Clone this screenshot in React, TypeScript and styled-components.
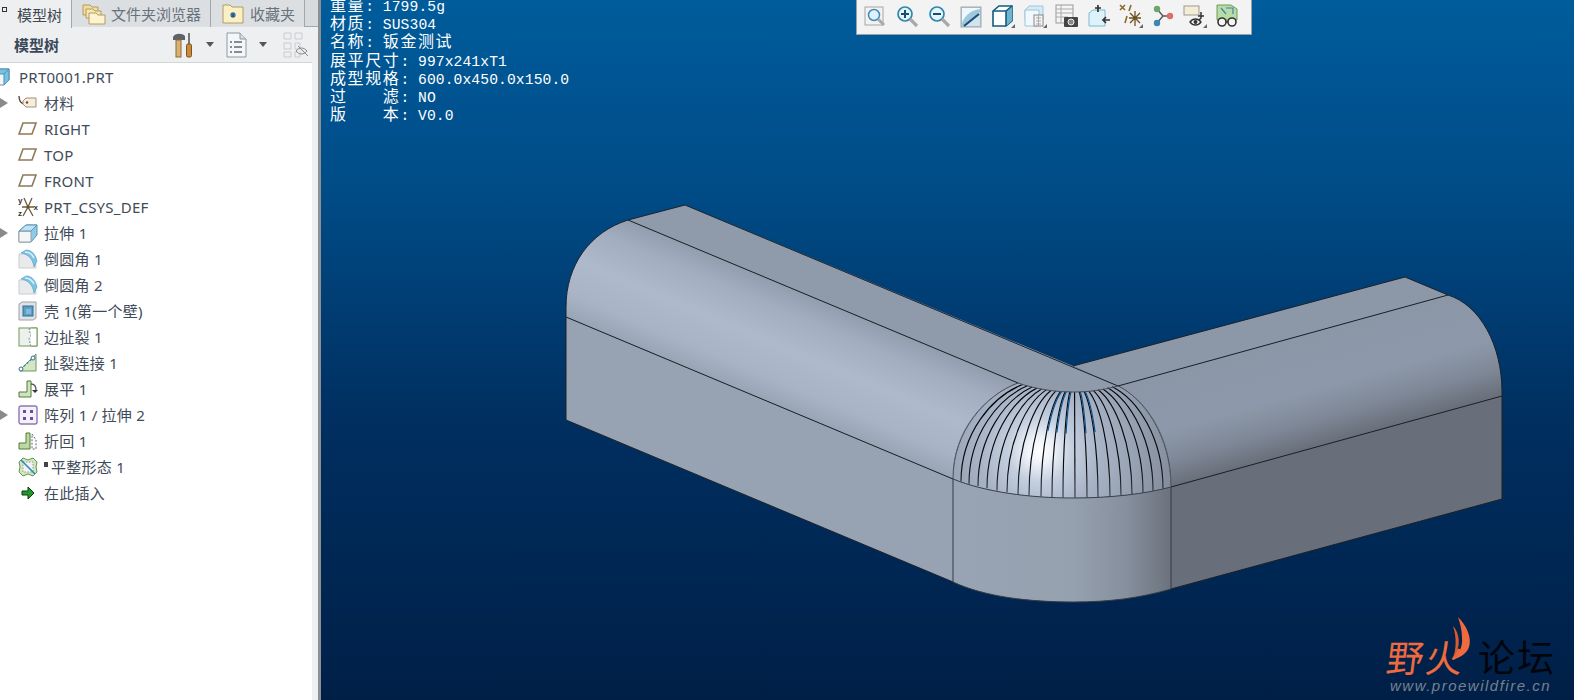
import React from 'react';
import styled, { createGlobalStyle } from 'styled-components';

const GlobalStyle = createGlobalStyle`
  html, body {
    margin: 0;
    padding: 0;
    background: #001f47;
  }
`;

const uiFont = `"Noto Sans", "Noto Sans CJK SC", sans-serif`;

const Page = styled.div`
  display: flex;
  width: 1574px;
  height: 700px;
  overflow: hidden;
  font-family: ${uiFont};
`;

const Sidebar = styled.aside`
  display: flex;
  flex-direction: column;
  flex: 0 0 318px;
  height: 700px;
  background: linear-gradient(to right, #fff 312px, #eeeff1 312px);
  border-right: 3px solid #8c8f93;
  box-sizing: content-box;
`;

const TabBar = styled.div`
  display: flex;
  height: 27px;
  background: #d8dbde;
  border-bottom: 1px solid #a3a7ab;
  box-sizing: border-box;
`;

const Tab = styled.div<{ $width: number; $active?: boolean }>`
  position: relative;
  display: flex;
  align-items: center;
  gap: 5px;
  width: ${p => p.$width}px;
  height: ${p => (p.$active ? 28 : 27)}px;
  box-sizing: border-box;
  padding-left: ${p => (p.$active ? 17 : 10)}px;
  background: ${p => (p.$active ? '#eeeff1' : '#dcdfe2')};
  border-right: 1px solid #a3a7ab;
  color: ${p => (p.$active ? '#3f4750' : '#68727d')};
  font-size: 15px;
  white-space: nowrap;
`;

const PinMark = styled.span`
  position: absolute;
  left: 2px;
  top: 7px;
  width: 3px;
  height: 3px;
  border: 1px solid #333;
`;

const PanelHeader = styled.div`
  display: flex;
  align-items: center;
  height: 36px;
  padding-left: 14px;
  background: #eeeff1;
  border-bottom: 1px solid #d3d6d9;
  width: 312px;
  box-sizing: border-box;
`;

const PanelTitle = styled.div`
  flex: 0 0 159px;
  color: #3b4857;
  font-size: 15px;
  font-weight: 700;
`;

const HeaderIcon = styled.svg<{ $gap: number }>`
  flex: none;
  margin-right: ${p => p.$gap}px;
`;

const Caret = styled.span<{ $gap: number }>`
  flex: none;
  width: 0;
  height: 0;
  margin-right: ${p => p.$gap}px;
  border-left: 4px solid transparent;
  border-right: 4px solid transparent;
  border-top: 5px solid #555;
`;

const Tree = styled.ul`
  list-style: none;
  margin: 0;
  padding: 1px 0 0;
  width: 312px;
`;

const Row = styled.li`
  display: flex;
  align-items: center;
  height: 26px;
  color: #3f4b59;
  font-size: 15px;
  line-height: 20px;
  letter-spacing: 0.25px;
  white-space: nowrap;
`;

const Expander = styled.span<{ $open: boolean }>`
  flex: 0 0 8px;
  height: 0;
  margin-right: 10px;
  border-left: 8px solid ${p => (p.$open ? '#8a8a8a' : 'transparent')};
  border-top: 5px solid transparent;
  border-bottom: 5px solid transparent;
  box-sizing: border-box;
`;

const IconSlot = styled.span<{ $root?: boolean }>`
  display: flex;
  flex: 0 0 20px;
  margin: ${p => (p.$root ? '0 8px 0 -9px' : '0 6px 0 0')};
`;

const Marker = styled.span`
  align-self: flex-start;
  flex: none;
  width: 4px;
  height: 5px;
  margin: 8px 3px 0 0;
  background: #444;
`;

const Canvas = styled.main`
  position: relative;
  flex: 1;
  height: 700px;
  overflow: hidden;
  background: linear-gradient(to bottom, #005c9b 0%, #004b86 28%, #002f60 60%, #001f47 100%);
`;

const PartDrawing = styled.svg`
  position: absolute;
  left: 0;
  top: 0;
`;

const InfoBlock = styled.div`
  position: absolute;
  left: 9px;
  top: -4px;
  color: #fff;
  font-family: "Noto Sans CJK SC", sans-serif;
  font-size: 16px;
`;

const InfoRow = styled.div`
  display: flex;
  align-items: baseline;
  height: 18.2px;
  white-space: pre;
`;

const InfoLabel = styled.span`
  line-height: 16px;
  letter-spacing: 1.6px;
`;

const InfoColon = styled.span`
  width: 17.6px;
  font-family: "Liberation Mono", monospace;
  font-size: 14.67px;
  line-height: 14px;
`;

const InfoValue = styled.span<{ $cjk?: boolean }>`
  font-family: ${p => (p.$cjk ? `"Noto Sans CJK SC", sans-serif` : `"Liberation Mono", monospace`)};
  font-size: ${p => (p.$cjk ? 16 : 14.67)}px;
  line-height: 14px;
  letter-spacing: ${p => (p.$cjk ? 1.6 : 0.1)}px;
`;

const ViewToolbar = styled.div`
  position: absolute;
  left: 535px;
  top: 0;
  display: flex;
  align-items: center;
  gap: 8px;
  width: 396px;
  height: 35px;
  box-sizing: border-box;
  padding: 0 0 2px 6px;
  background: #f3f3f3;
  border: 1px solid #9aa0a6;
  border-top: 0;
`;

const Watermark = styled.div`
  position: absolute;
  left: 1066px;
  top: 633px;
  width: 180px;
`;

const WatermarkTitle = styled.div`
  display: flex;
  font-family: "Noto Sans CJK SC", sans-serif;
  font-size: 37px;
  letter-spacing: 2px;
  line-height: 46px;
`;

const WatermarkFire = styled.span`
  display: inline-block;
  color: #ef6a3c;
  transform: skewX(-7deg);
`;

const WatermarkForum = styled.span`
  margin-left: 13px;
  color: #02060c;
`;

const WatermarkUrl = styled.div`
  margin: -2px 0 0 3px;
  color: #76828f;
  font-family: "Liberation Sans", sans-serif;
  font-size: 15px;
  font-style: italic;
  letter-spacing: 1.5px;
  white-space: nowrap;
`;

const Flame = styled.svg`
  position: absolute;
  left: 61px;
  top: -17px;
`;

const TreeSvg = ({ children }: { children: React.ReactNode }) => (
  <svg width="20" height="20" viewBox="0 0 20 20" fill="none">{children}</svg>
);

const SolidIcon = () => (
  <TreeSvg>
    <path d="M1 7l6-5h11v11l-5 5H1z" fill="#f2f5f7" stroke="#7b8b97" />
    <path d="M1 7l6-5h11l-5 5z M13 7l5-5v11l-5 5z" fill="#74c2e6" stroke="#4f8fb0" />
  </TreeSvg>
);

const TagIcon = () => (
  <TreeSvg>
    <path d="M1 3c0 4 1 7 5 8" stroke="#4a4030" strokeWidth="1.3" />
    <path d="M5 8l3-3h10v9H8l-3-3z" fill="#f5ede0" stroke="#a48f6d" />
    <circle cx="9" cy="9.5" r="1.2" fill="#8a3a2a" />
  </TreeSvg>
);

const PlaneIcon = () => (
  <TreeSvg>
    <path d="M5 4h13l-4 11H1z" fill="#fff" stroke="#8e7a58" strokeWidth="1.6" />
  </TreeSvg>
);

const CsysIcon = () => (
  <TreeSvg>
    <path d="M10 10L6 1M10 10l4-9M10 10l-5 9M10 10l5 9M4 10h12" stroke="#6d5c3e" strokeWidth="1.3" />
    <text x="0" y="6" fontSize="8" fontFamily="Liberation Sans" fontWeight="700" fill="#333">y</text>
    <text x="0" y="19" fontSize="8" fontFamily="Liberation Sans" fontWeight="700" fill="#333">z</text>
    <text x="15.5" y="13" fontSize="8" fontFamily="Liberation Sans" fontWeight="700" fill="#333">x</text>
    <circle cx="10" cy="10" r="1.5" fill="#6d4c1e" />
  </TreeSvg>
);

const ExtrudeIcon = () => (
  <TreeSvg>
    <path d="M1 8l7-6h11v10l-6 7H1z" fill="#8fcbe8" stroke="#5a93b0" />
    <path d="M1 8h12v11H1z" fill="#f4f5f5" stroke="#9aa3aa" />
    <path d="M1 8l7-6h11l-6 6z" fill="#bfe3f3" stroke="#5a93b0" />
  </TreeSvg>
);

const RoundIcon = () => (
  <TreeSvg>
    <path d="M1 5h7c6 0 10 5 10 14H1z" fill="#e9eaeb" stroke="#c9ccce" />
    <path d="M3 4l5-3c5 0 9 3 11 11l-3 6C15 10 10 5 3 4z" fill="#7cc4e6" stroke="#4d97bb" strokeWidth=".6" />
    <path d="M7 3c4 0 7 2 9 6" stroke="#d6eff9" strokeWidth="1.6" />
  </TreeSvg>
);

const ShellIcon = () => (
  <TreeSvg>
    <path d="M1 3l3-2h14v16l-3 2H1z" fill="#dfe3e6" stroke="#9aa3aa" />
    <rect x="5" y="5" width="10" height="10" fill="#5e9ec4" stroke="#2f6f98" />
    <rect x="8" y="8" width="5" height="5" fill="#7fb9db" />
  </TreeSvg>
);

const RipIcon = () => (
  <TreeSvg>
    <rect x="1" y="1" width="18" height="18" fill="#eef0ee" stroke="#6c9a55" />
    <path d="M12 1c-3 4 3 6 0 9s2 6 0 9" stroke="#6f8f8a" strokeDasharray="2 1.5" />
    <path d="M13 1h6v18h-6" fill="#fff" stroke="#6c9a55" />
  </TreeSvg>
);

const RipJoinIcon = () => (
  <TreeSvg>
    <path d="M2 17L18 1v17H2z" fill="#d5e6c6" stroke="#6c9a55" />
    <path d="M3 16L17 3" stroke="#3a7aa8" strokeDasharray="2 2" strokeWidth="1.2" />
    <circle cx="3" cy="16" r="2" fill="#fff" stroke="#2a70a0" />
    <circle cx="15" cy="5" r="2" fill="#fff" stroke="#2a70a0" />
  </TreeSvg>
);

const UnbendIcon = () => (
  <TreeSvg>
    <path d="M1 18v-5h8V2h4v16z" fill="#cfe3bd" stroke="#4f7a38" />
    <path d="M13 5c3 0 5 2 5 6" stroke="#555" strokeWidth="1.3" />
    <path d="M14 11h6l-3 3z" fill="#333" />
  </TreeSvg>
);

const PatternIcon = () => (
  <TreeSvg>
    <rect x="1" y="1" width="18" height="18" rx="2" fill="#f5f1fa" stroke="#8a78b0" strokeWidth="1.4" />
    {[5, 12].map(y => [5, 12].map(x => <rect key={`${x}-${y}`} x={x} y={y} width="3" height="3" fill="#6a4ca0" />))}
  </TreeSvg>
);

const BendBackIcon = () => (
  <TreeSvg>
    <path d="M1 18v-6h7V2h4v16z" fill="#bcd9a4" stroke="#4f7a38" />
    <path d="M14 3l4 6v9h-4z" fill="#fff" stroke="#666" strokeDasharray="2 1.5" />
  </TreeSvg>
);

const FlatIcon = () => (
  <TreeSvg>
    <path d="M1 5l4-4 5 2 5-2 4 4-1 5 1 5-4 4-5-2-5 2-4-4 1-5z" fill="#cfe8c0" stroke="#5f9a48" />
    <rect x="5" y="5" width="10" height="10" fill="#f2f2f2" stroke="#999" strokeDasharray="1.5 1.5" />
    <path d="M3 3l14 14" stroke="#2f86c0" strokeWidth="1.6" />
  </TreeSvg>
);

const InsertIcon = () => (
  <TreeSvg>
    <path d="M4 8h6V4l6 6-6 6v-4H4z" fill="#1f9a2a" stroke="#0a3a10" strokeWidth="1" />
  </TreeSvg>
);

type TreeItem = {
  label: string;
  Icon: () => React.ReactElement;
  open?: boolean;
  root?: boolean;
  marked?: boolean;
};

const treeItems: TreeItem[] = [
  { label: 'PRT0001.PRT', Icon: SolidIcon, root: true },
  { label: '材料', Icon: TagIcon, open: true },
  { label: 'RIGHT', Icon: PlaneIcon },
  { label: 'TOP', Icon: PlaneIcon },
  { label: 'FRONT', Icon: PlaneIcon },
  { label: 'PRT_CSYS_DEF', Icon: CsysIcon },
  { label: '拉伸 1', Icon: ExtrudeIcon, open: true },
  { label: '倒圆角 1', Icon: RoundIcon },
  { label: '倒圆角 2', Icon: RoundIcon },
  { label: '壳 1(第一个壁)', Icon: ShellIcon },
  { label: '边扯裂 1', Icon: RipIcon },
  { label: '扯裂连接 1', Icon: RipJoinIcon },
  { label: '展平 1', Icon: UnbendIcon },
  { label: '阵列 1 / 拉伸 2', Icon: PatternIcon, open: true },
  { label: '折回 1', Icon: BendBackIcon },
  { label: '平整形态 1', Icon: FlatIcon, marked: true },
  { label: '在此插入', Icon: InsertIcon },
];

const infoRows = [
  { label: '重量', value: '1799.5g' },
  { label: '材质', value: 'SUS304' },
  { label: '名称', value: '钣金测试', cjk: true },
  { label: '展平尺寸', value: '997x241xT1' },
  { label: '成型规格', value: '600.0x450.0x150.0' },
  { label: '过\u3000\u3000滤', value: 'NO' },
  { label: '版\u3000\u3000本', value: 'V0.0' },
];

const ToolSvg = ({ children }: { children: React.ReactNode }) => (
  <svg width="24" height="24" viewBox="0 0 24 24" fill="none" style={{ flex: 'none' }}>{children}</svg>
);

const Corner = () => <path d="M20 24h4v-4z" fill="#666" />;

const toolIcons: React.ReactElement[] = [
  <ToolSvg key="refit">
    <rect x="2" y="3" width="18" height="18" fill="#f2f2f2" stroke="#a6a6a6" />
    <circle cx="11" cy="11" r="5.5" fill="#dff1fb" stroke="#3f8db5" strokeWidth="1.5" />
    <path d="M15 15l6 6" stroke="#aaa" strokeWidth="3" />
  </ToolSvg>,
  <ToolSvg key="zoom-in">
    <circle cx="10" cy="10" r="7" fill="#e6f4fb" stroke="#2f86ad" strokeWidth="1.7" />
    <path d="M6 10h8M10 6v8" stroke="#164f70" strokeWidth="2" />
    <path d="M15 15l7 7" stroke="#a9a9a9" strokeWidth="3.2" />
  </ToolSvg>,
  <ToolSvg key="zoom-out">
    <circle cx="10" cy="10" r="7" fill="#e6f4fb" stroke="#2f86ad" strokeWidth="1.7" />
    <path d="M6 10h8" stroke="#164f70" strokeWidth="2" />
    <path d="M15 15l7 7" stroke="#a9a9a9" strokeWidth="3.2" />
  </ToolSvg>,
  <ToolSvg key="repaint">
    <rect x="2" y="3" width="20" height="20" fill="#9fc8dc" stroke="#a8a8a8" />
    <path d="M3 19C7 9 14 6 21 5V4H3z" fill="#eef7fb" />
    <path d="M3 22c5-2 12-7 18-14v14z" fill="#cfe4ee" />
    <path d="M5 22L20 10" stroke="#1c4f75" strokeWidth="2.2" />
  </ToolSvg>,
  <ToolSvg key="display">
    <path d="M2 7l6-5h13v15l-6 5H2z" fill="#fff" stroke="#125b7e" strokeWidth="1.6" />
    <path d="M15 7l6-5v15l-6 5z" fill="#6fb4cf" />
    <path d="M2 7h13v15M15 7l6-5" stroke="#125b7e" strokeWidth="1.6" />
    <Corner />
  </ToolSvg>,
  <ToolSvg key="views">
    <path d="M2 6l4-4h14v14H2z" fill="#d5ebf6" stroke="#9dc6da" />
    <path d="M2 6h14v16H2z" fill="#f2f9fc" stroke="#9dc6da" />
    <rect x="11" y="11" width="9" height="11" fill="#f5f5f5" stroke="#888" />
    <path d="M13 14h5M13 17h5M13 20h5M15.5 11v11" stroke="#aaa" />
    <Corner />
  </ToolSvg>,
  <ToolSvg key="snapshot">
    <rect x="1" y="1" width="17" height="18" fill="#f5f5f5" stroke="#999" />
    <path d="M1 5h17M1 9h17M1 13h12M6 1v18" stroke="#aaa" />
    <rect x="9" y="13" width="14" height="10" rx="1" fill="#444" />
    <circle cx="16" cy="18" r="3" fill="#888" stroke="#eee" />
  </ToolSvg>,
  <ToolSvg key="orient">
    <path d="M2 9l4-3h12v16H2z" fill="#dff1fa" stroke="#7db9d6" />
    <path d="M11 1v7M8 4h6" stroke="#333" strokeWidth="1.7" />
    <path d="M23 16h-7M19 13l-3 3 3 3" stroke="#333" strokeWidth="1.7" />
  </ToolSvg>,
  <ToolSvg key="datum">
    <path d="M1 1l5 5M6 1L1 6" stroke="#8a6a2a" strokeWidth="1.6" />
    <path d="M12 1l-2 6M8 12l-2 7" stroke="#8a6a2a" strokeWidth="1.6" />
    <path d="M16 7v15M10 14h12M11 9l10 10M21 9L11 19" stroke="#6b4f1f" strokeWidth="1.3" />
    <Corner />
  </ToolSvg>,
  <ToolSvg key="annot">
    <path d="M6 5l6 7-6 7M12 12h6" stroke="#555" strokeWidth="1.4" />
    <circle cx="6" cy="5" r="3.2" fill="#6aa86a" />
    <circle cx="6" cy="19" r="3.2" fill="#3a86b5" />
    <circle cx="19" cy="12" r="3.2" fill="#d9706a" />
  </ToolSvg>,
  <ToolSvg key="saved">
    <rect x="1" y="2" width="15" height="9" fill="#f5ecd5" stroke="#999" />
    <path d="M15 12h6M18 8v6l-3 3" stroke="#333" strokeWidth="1.5" />
    <path d="M7 18c3-4 8-4 11 0-3 4-8 4-11 0z" fill="#fff" stroke="#333" strokeWidth="1.3" />
    <circle cx="12.5" cy="18" r="2" fill="#333" />
    <Corner />
  </ToolSvg>,
  <ToolSvg key="inspect">
    <path d="M2 1h14l6 4v11H2z" fill="#b9dba6" stroke="#6b9e55" />
    <path d="M6 4l5 6M11 4h7v6" stroke="#3a86b5" strokeWidth="1.2" />
    <circle cx="7" cy="18" r="4" fill="#f5f5f5" stroke="#333" strokeWidth="1.6" />
    <circle cx="17" cy="18" r="4" fill="#f5f5f5" stroke="#333" strokeWidth="1.6" />
    <path d="M11 18h2" stroke="#333" strokeWidth="1.6" />
  </ToolSvg>,
];

// rib ends read from the reference, left to right
const ribBottoms = [953, 961, 969, 978, 987, 997, 1007, 1018, 1029, 1041, 1052, 1063, 1075, 1087, 1098, 1110, 1121, 1132, 1143, 1153, 1163, 1171];

const baseY = (x: number) => {
  const d = x - 1073;
  return d < 0 ? 498 - 19 * (d / 120) ** 2 : 498 - 11 * (d / 98) ** 2;
};

const crownY = (x: number) => {
  const d = x - 1073;
  return d < 0 ? 392 - 9 * (d / 55) ** 2 : 392 - 7 * (d / 45) ** 2;
};

const ribPath = (i: number) => {
  const bx = ribBottoms[i];
  const by = baseY(bx);
  const tx = 1018 + (i / 21) * 99;
  const ty = crownY(tx);
  const h = by - ty;
  return `M${tx} ${ty}C${tx + (bx - tx) * 0.5} ${ty + h * 0.125} ${bx} ${by - h * 0.5} ${bx} ${by}`;
};

const Part = () => (
  <PartDrawing width="1253" height="700" viewBox="321 0 1253 700">
    <defs>
      <linearGradient id="leftRound" gradientUnits="userSpaceOnUse" x1="628" y1="220" x2="584" y2="325">
        <stop offset="0" stopColor="#929dae" />
        <stop offset=".2" stopColor="#a2aec0" />
        <stop offset=".5" stopColor="#aebacc" />
        <stop offset=".8" stopColor="#a8b3c5" />
        <stop offset="1" stopColor="#98a3b4" />
      </linearGradient>
      <linearGradient id="rightRound" gradientUnits="userSpaceOnUse" x1="1118" y1="386" x2="1148" y2="493">
        <stop offset="0" stopColor="#8b96a7" />
        <stop offset=".5" stopColor="#8d99aa" />
        <stop offset=".78" stopColor="#7e8796" />
        <stop offset="1" stopColor="#69707b" />
      </linearGradient>
      <linearGradient id="cornerBase" gradientUnits="userSpaceOnUse" x1="953" y1="0" x2="1171" y2="0">
        <stop offset="0" stopColor="#98a3b3" />
        <stop offset=".55" stopColor="#96a1b0" />
        <stop offset=".8" stopColor="#858f9d" />
        <stop offset="1" stopColor="#6b727d" />
      </linearGradient>
      <radialGradient id="dome" gradientUnits="userSpaceOnUse" cx="1040" cy="450" r="135">
        <stop offset="0" stopColor="#ffffff" />
        <stop offset=".1" stopColor="#eef2f8" />
        <stop offset=".24" stopColor="#c3cede" />
        <stop offset=".45" stopColor="#a8b4c6" />
        <stop offset=".75" stopColor="#939eae" />
        <stop offset="1" stopColor="#838c9a" />
      </radialGradient>
      <linearGradient id="ribStroke" gradientUnits="userSpaceOnUse" x1="0" y1="383" x2="0" y2="498">
        <stop offset="0" stopColor="#05080c" />
        <stop offset=".7" stopColor="#05080c" />
        <stop offset="1" stopColor="#3b424c" />
      </linearGradient>
    </defs>

    <path d="M685 205L1073 366 1118 386C1103 390 1090 392 1073 392 1055 392 1035 389 1018 383L628 220Z" fill="#8f9aaa" />
    <path d="M1073 366L1405 277 1448 295 1118 386Z" fill="#8c97a8" />
    <path d="M628 220C590 232 566 265 566 307V317L953 479V476C953 430 985 395 1018 383Z" fill="url(#leftRound)" />
    <path d="M1118 386L1448 295C1480 305 1502 345 1502 392V396L1171 487V477C1168 430 1145 400 1118 386Z" fill="url(#rightRound)" />
    <path d="M566 317L953 479V582L566 420Z" fill="#97a2b2" />
    <path d="M1171 487L1502 396V499L1171 589Z" fill="#696f7a" />
    <path d="M953 479C985 492 1030 498 1073 498 1110 498 1145 494 1171 487V589C1140 598 1110 602 1073 602 1030 602 985 597 953 582Z" fill="url(#cornerBase)" />
    <path d="M953 479V476C953 430 985 395 1018 383 1035 389 1055 392 1073 392 1090 392 1103 390 1118 386 1145 400 1168 430 1171 477V487C1145 494 1110 498 1073 498 1030 498 985 492 953 479Z" fill="url(#dome)" />

    {ribBottoms.map((_, i) => (
      <path
        key={i}
        d={ribPath(i)}
        fill="none"
        stroke={i === 0 || i === 21 ? '#4a515b' : 'url(#ribStroke)'}
        strokeWidth={i === 0 || i === 21 ? 1 : 1.15}
      />
    ))}
    {[9, 10, 11, 13, 14].map(i => (
      <path key={i} d={ribPath(i)} fill="none" stroke="#0a4f8c" strokeWidth="1.2" strokeDasharray="42 200" transform="translate(1.1 0)" />
    ))}

    <g fill="none" stroke="#1c2229" strokeWidth="1">
      <path d="M628 220L685 205 1118 386" />
      <path d="M1073 366L1405 277 1448 295" />
      <path d="M628 220L1018 383" />
      <path d="M1118 386L1448 295" />
      <path d="M628 220C590 232 566 265 566 307V420L953 582" />
      <path d="M566 317L953 479" />
      <path d="M1448 295C1480 305 1502 345 1502 392V499L1171 589" />
      <path d="M1171 487L1502 396" />
      <path d="M953 479V582C985 597 1030 602 1073 602 1110 602 1140 598 1171 589V487" stroke="#353b43" />
      <path d="M953 479C985 492 1030 498 1073 498 1110 498 1145 494 1171 487" stroke="#3b424c" />
      <path d="M1018 383C1035 389 1055 392 1073 392 1090 392 1103 390 1118 386" stroke="#4a515b" />
    </g>
  </PartDrawing>
);

const App = () => (
  <Page>
    <GlobalStyle />
    <Sidebar>
      <TabBar>
        <Tab $width={72} $active>
          <PinMark />
          模型树
        </Tab>
        <Tab $width={139}>
          <svg width="24" height="24" viewBox="0 0 24 24" fill="none">
            <path d="M1 3h7l2 2h6v8H1z" fill="#f1dc9a" stroke="#b39a62" />
            <path d="M4 7h7l2 2h6v7H4z" fill="#f7e7b2" stroke="#b39a62" />
            <path d="M7 11h7l2 2h7v9H7z" fill="#fdf3cc" stroke="#b39a62" />
          </svg>
          文件夹浏览器
        </Tab>
        <Tab $width={94}>
          <svg width="24" height="20" viewBox="0 0 24 20" fill="none">
            <path d="M2 1h7l2 2h11v16H2z" fill="#fbefc4" stroke="#b39a62" />
            <path d="M9 11h6M12 8v6M10 9l4 4M14 9l-4 4" stroke="#1f5f96" strokeWidth="1.2" />
          </svg>
          收藏夹
        </Tab>
      </TabBar>
      <PanelHeader>
        <PanelTitle>模型树</PanelTitle>
        <HeaderIcon $gap={13} width="20" height="26" viewBox="0 0 20 26" fill="none">
          <path d="M0 5c2-4 9-4 12-1v4H0z" fill="#5f6266" />
          <rect x="3" y="8" width="5" height="17" fill="#d9b271" stroke="#8a6a35" />
          <path d="M16 1v11" stroke="#777" strokeWidth="2" />
          <rect x="13.5" y="12" width="5" height="13" rx="1.5" fill="#c98a3a" stroke="#7a5520" />
        </HeaderIcon>
        <Caret $gap={12} />
        <HeaderIcon $gap={12} width="21" height="26" viewBox="0 0 21 26" fill="none">
          <path d="M1 1h13l6 6v18H1z" fill="#f5f6f7" stroke="#8c99a5" />
          <path d="M14 1v6h6" fill="#d9dde0" stroke="#8c99a5" />
          <path d="M4 10h2M8 10h8M4 15h2M8 15h8M4 20h2M8 20h8" stroke="#5f6b75" strokeWidth="1.4" />
        </HeaderIcon>
        <Caret $gap={16} />
        <HeaderIcon $gap={0} width="26" height="26" viewBox="0 0 26 26" fill="none">
          <path d="M1 1h7v6H1zM12 1h7v6h-7zM1 11h7v6H1zM1 20h7v5H1zM12 11h5v6h-5zM12 20h5v5h-5z" stroke="#c9cccf" />
          <path d="M13 19c3-4 8-4 11 0-3 4-8 4-11 0z" fill="#e8e9ea" stroke="#8a8d90" />
          <path d="M15 14l10 10" stroke="#8a8d90" />
        </HeaderIcon>
      </PanelHeader>
      <Tree>
        {treeItems.map(({ label, Icon, open, root, marked }) => (
          <Row key={label}>
            {!root && <Expander $open={!!open} />}
            <IconSlot $root={root}>
              <Icon />
            </IconSlot>
            {marked && <Marker />}
            {label}
          </Row>
        ))}
      </Tree>
    </Sidebar>
    <Canvas>
      <Part />
      <InfoBlock>
        {infoRows.map(({ label, value, cjk }) => (
          <InfoRow key={label}>
            <InfoLabel>{label}</InfoLabel>
            <InfoColon>:</InfoColon>
            <InfoValue $cjk={cjk}>{value}</InfoValue>
          </InfoRow>
        ))}
      </InfoBlock>
      <ViewToolbar>{toolIcons}</ViewToolbar>
      <Watermark>
        <WatermarkTitle>
          <WatermarkFire>野火</WatermarkFire>
          <WatermarkForum>论坛</WatermarkForum>
        </WatermarkTitle>
        <WatermarkUrl>www.proewildfire.cn</WatermarkUrl>
        <Flame width="36" height="50" viewBox="0 0 36 50" fill="none">
          <path d="M10 1C19 10 24 22 21 31C19 37 13 41 5 44C11 38 15 30 14 22C14 14 12 7 10 1Z" fill="#ef6a3c" />
          <path d="M5 10C10 15 12 24 10 32C9 36 7 40 5 42C8 34 9 22 5 10Z" fill="#d95a2e" />
        </Flame>
      </Watermark>
    </Canvas>
  </Page>
);

export default App;
